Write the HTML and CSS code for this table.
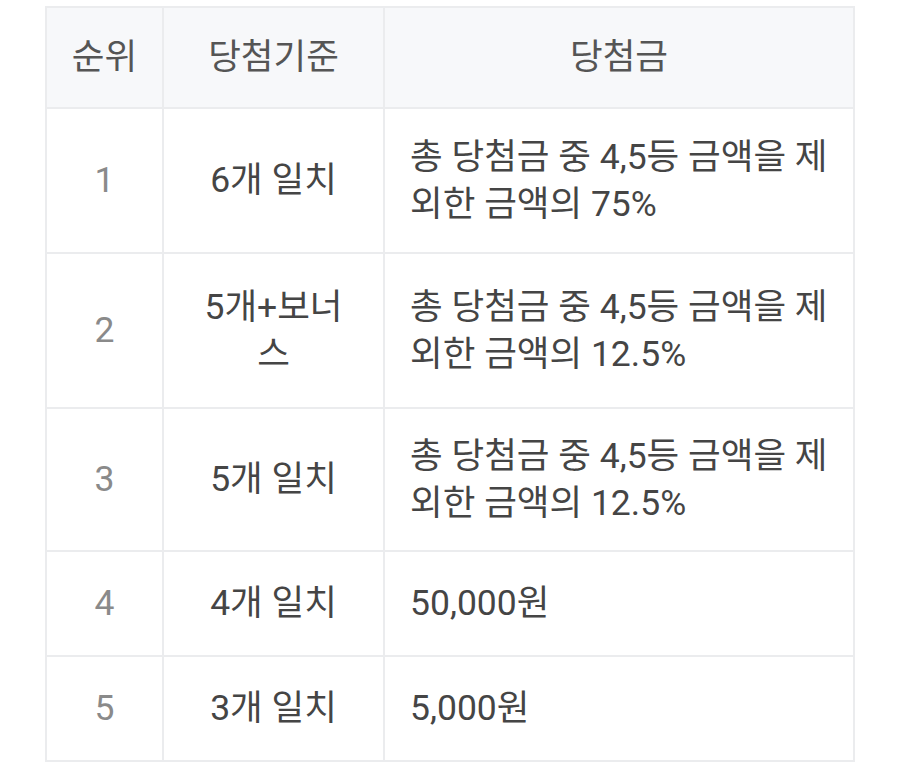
FILE: index.html
```html
<!DOCTYPE html>
<html lang="ko">
<head>
<meta charset="utf-8">
<link rel="stylesheet" href="styles.css">
</head>
<body>
<div class="wrap">
<table class="prize">
  <colgroup>
    <col class="col-rank">
    <col class="col-cond">
    <col class="col-money">
  </colgroup>
  <thead>
    <tr class="head-row">
      <th>순위</th>
      <th>당첨기준</th>
      <th>당첨금</th>
    </tr>
  </thead>
  <tbody>
    <tr class="r1">
      <td class="c-rank">1</td>
      <td class="c-cond">6개 일치</td>
      <td class="c-money">총 당첨금 중 4,5등 금액을 제외한 금액의 75%</td>
    </tr>
    <tr class="r2">
      <td class="c-rank">2</td>
      <td class="c-cond">5개+보너스</td>
      <td class="c-money">총 당첨금 중 4,5등 금액을 제외한 금액의 12.5%</td>
    </tr>
    <tr class="r3">
      <td class="c-rank">3</td>
      <td class="c-cond">5개 일치</td>
      <td class="c-money">총 당첨금 중 4,5등 금액을 제외한 금액의 12.5%</td>
    </tr>
    <tr class="r4">
      <td class="c-rank">4</td>
      <td class="c-cond">4개 일치</td>
      <td class="c-money">50,000원</td>
    </tr>
    <tr class="r5">
      <td class="c-rank">5</td>
      <td class="c-cond">3개 일치</td>
      <td class="c-money">5,000원</td>
    </tr>
  </tbody>
</table>
</div>
</body>
</html>
```

FILE: styles.css
```css
html, body {
  margin: 0;
  padding: 0;
  background: #ffffff;
}

.wrap {
  padding: 6px 0 0 45px;
}

.prize {
  border-collapse: collapse;
  table-layout: fixed;
  width: 810px;
  font-family: Roboto, "Noto Sans CJK KR", sans-serif;
  font-size: 35.5px;
  line-height: 47px;
  color: #454545;
}

.col-rank { width: 117px; }
.col-cond { width: 221px; }

.prize th,
.prize td {
  border: 2px solid #ebecee;
  vertical-align: middle;
  font-weight: normal;
  padding: 0 26px;
}

.prize th {
  background: #f7f8fa;
  color: #555555;
  text-align: center;
  padding: 0;
}

.c-rank { text-align: center; color: #8a8a8a; }
.c-cond { text-align: center; }
.c-money { text-align: left; }

td.c-rank { padding: 0; }
td.c-money { padding: 0 12px 0 25px; }

.head-row { height: 101px; }
.r1 { height: 145px; }
.r2 { height: 155px; }
.r3 { height: 143px; }
.r4 { height: 105px; }
.r5 { height: 105px; }
```
